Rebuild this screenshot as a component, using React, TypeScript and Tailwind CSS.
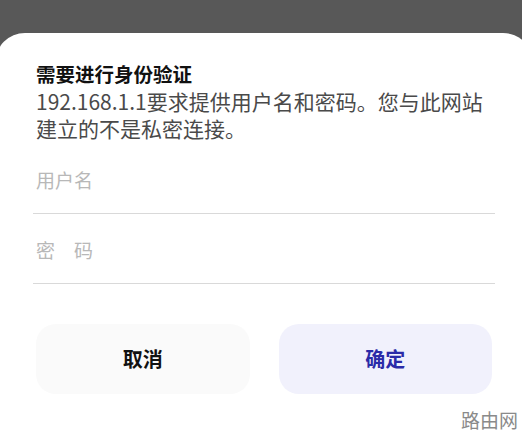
import React from "react";

export default function App() {
  const cjk = { fontFamily: '"Noto Sans CJK SC", "Noto Sans", sans-serif' };
  return (
    <div className="w-[522px] h-[434px] overflow-hidden bg-[#585858] relative" style={cjk}>
      <div className="h-[33px]" />
      <div className="-ml-[5px] w-[538px] h-[420px] bg-white rounded-t-[30px] pl-[41px] pr-[41px] pt-[28px]">
        <div className="text-[19.5px] font-bold leading-[26px] text-[#111]">需要进行身份验证</div>
        <div className="text-[21px] leading-[27px] text-[#4a4a4a] mt-[1px]">
          <div className="whitespace-nowrap">192.168.1.1要求提供用户名和密码。您与此网站</div>
          <div className="whitespace-nowrap">建立的不是私密连接。</div>
        </div>
        <div className="mt-[16px] h-[44px] flex items-center text-[19px] text-[#b8b8b8]">用户名</div>
        <div className="-mx-[3px] h-px bg-[#d9d9d9] mt-[11px]" />
        <div className="mt-[24px] h-[24px] flex items-center text-[19px] text-[#b8b8b8]">密　码</div>
        <div className="-mx-[3px] h-px bg-[#d9d9d9] mt-[21px]" />
        <div className="mt-[40px] flex gap-[29px]">
          <button className="flex-1 h-[70px] rounded-[20px] bg-[#fafafa] text-[20px] font-bold text-[#111]">取消</button>
          <button className="flex-1 h-[70px] rounded-[20px] bg-[#f1f1fc] text-[20px] font-bold text-[#2b2ba8]">确定</button>
        </div>
      </div>
      <div className="absolute right-[4px] bottom-[2px] text-[19px] text-[#8a8a8a] leading-[24px]">路由网</div>
    </div>
  );
}
